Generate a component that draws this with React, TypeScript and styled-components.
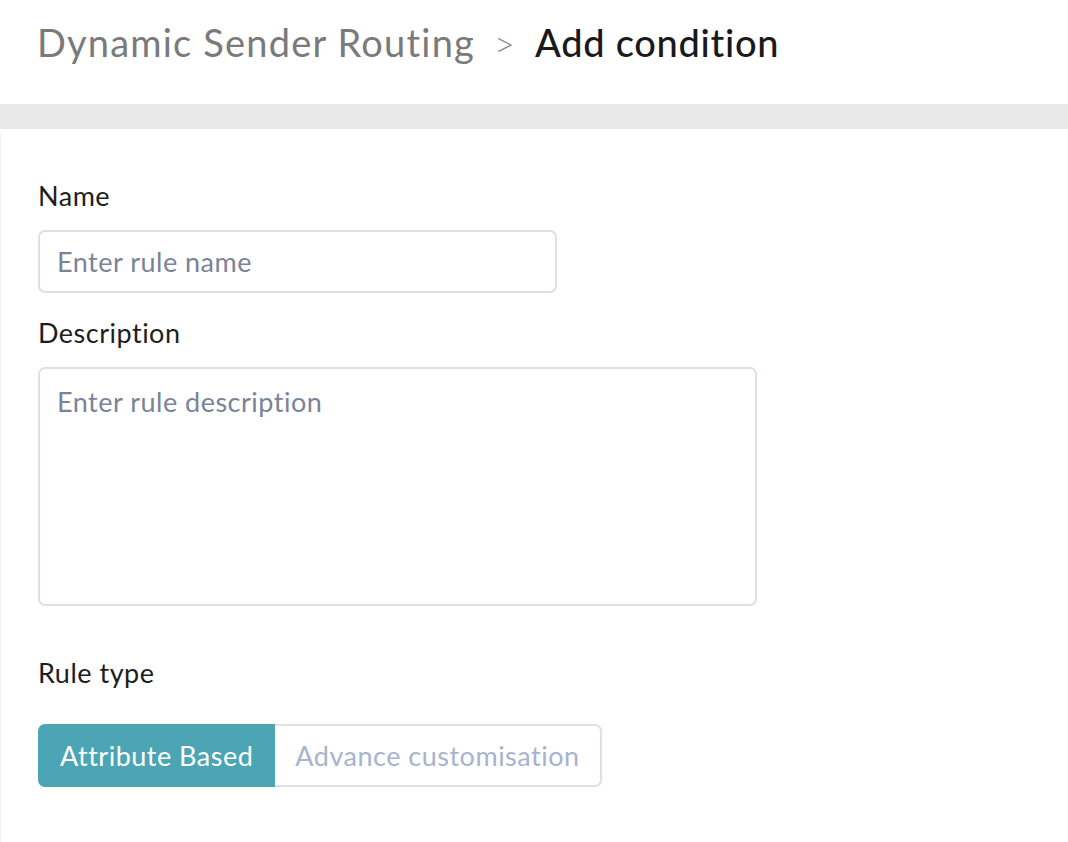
import styled, { createGlobalStyle } from "styled-components";

const Global = createGlobalStyle`
  body {
    margin: 0;
    background: #ffffff;
    font-family: Lato, "Noto Sans", sans-serif;
    letter-spacing: 0.5px;
  }
`;

const Page = styled.div`
  display: flex;
  flex-direction: column;
  min-height: 842px;
`;

const Header = styled.header`
  display: flex;
  align-items: baseline;
  gap: 19px;
  height: 104px;
  padding: 19px 37px 0;
  box-sizing: border-box;
  font-size: 38px;
  letter-spacing: 1.2px;
`;

const Crumb = styled.span<{ $current?: boolean }>`
  color: ${(p) => (p.$current ? "#1a1a1a" : "#7a7a7a")};
  font-weight: ${(p) => (p.$current ? 500 : 400)};
  letter-spacing: ${(p) => (p.$current ? "0.7px" : "1.2px")};
`;

const Sep = styled.span`
  color: #8a8a8a;
  font-size: 36px;
  font-weight: 300;
`;

const Band = styled.div`
  height: 25px;
  background: #e9e9e9;
`;

const Card = styled.main`
  flex: 1;
  display: flex;
  flex-direction: column;
  padding: 50px 37px 40px;
  background: #fff;
  border-left: 1px solid #f1f1f1;
  border-top-left-radius: 6px;
`;

const Label = styled.label<{ $gap?: number }>`
  font-size: 27px;
  line-height: 34px;
  color: #1e1e1e;
  margin-bottom: ${(p) => p.$gap ?? 17}px;
`;

const TextInput = styled.input`
  width: 519px;
  height: 63px;
  box-sizing: border-box;
  padding: 0 17px;
  border: 2px solid #dde0ea;
  border-radius: 7px;
  font: inherit;
  font-size: 27px;
  letter-spacing: 0.5px;
  color: #333;
  margin-bottom: 23px;
  &::placeholder {
    color: #7b8399;
  }
`;

const TextArea = styled.textarea`
  width: 719px;
  height: 239px;
  box-sizing: border-box;
  padding: 16px 17px;
  border: 2px solid #dde0ea;
  border-radius: 7px;
  font: inherit;
  font-size: 27px;
  line-height: 34px;
  letter-spacing: 0.5px;
  resize: none;
  margin-bottom: 50px;
  &::placeholder {
    color: #7b8399;
  }
`;

const Toggle = styled.div`
  display: flex;
  align-self: flex-start;
`;

const Option = styled.button<{ $active?: boolean }>`
  height: 63px;
  padding: 0 20px;
  font: inherit;
  font-size: 27px;
  letter-spacing: 0.5px;
  border: 2px solid ${(p) => (p.$active ? "#4ba5b5" : "#dde0ea")};
  background: ${(p) => (p.$active ? "#4ba5b5" : "#fff")};
  color: ${(p) => (p.$active ? "#fff" : "#a8b3cf")};
  &:first-child {
    border-radius: 7px 0 0 7px;
  }
  &:last-child {
    border-left: none;
    border-radius: 0 7px 7px 0;
  }
`;

export default function App() {
  return (
    <Page>
      <Global />
      <Header>
        <Crumb>Dynamic Sender Routing</Crumb>
        <Sep>&gt;</Sep>
        <Crumb $current>Add condition</Crumb>
      </Header>
      <Band />
      <Card>
        <Label>Name</Label>
        <TextInput placeholder="Enter rule name" />
        <Label>Description</Label>
        <TextArea placeholder="Enter rule description" />
        <Label $gap={34}>Rule type</Label>
        <Toggle>
          <Option $active>Attribute Based</Option>
          <Option>Advance customisation</Option>
        </Toggle>
      </Card>
    </Page>
  );
}
